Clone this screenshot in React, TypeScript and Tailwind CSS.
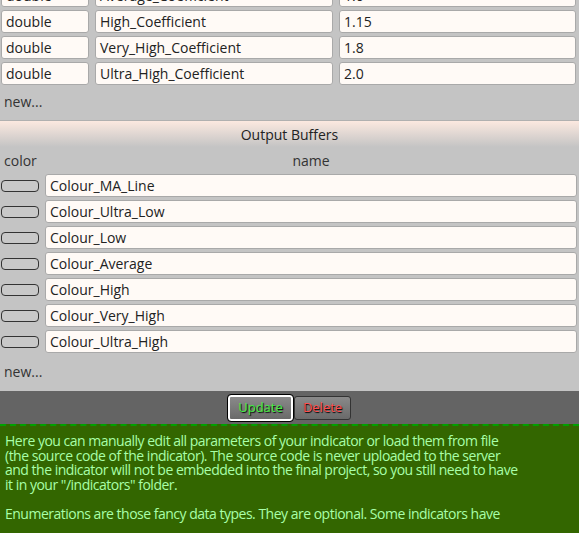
import React from "react";

const params = [
  ["double", "Average_Coefficient", "1.0"],
  ["double", "High_Coefficient", "1.15"],
  ["double", "Very_High_Coefficient", "1.8"],
  ["double", "Ultra_High_Coefficient", "2.0"],
];

const buffers = [
  "Colour_MA_Line",
  "Colour_Ultra_Low",
  "Colour_Low",
  "Colour_Average",
  "Colour_High",
  "Colour_Very_High",
  "Colour_Ultra_High",
];

const inputCls =
  "h-[23px] rounded-[3px] border border-[#a9a9a9] bg-[#fffaf6] px-[4px] text-[14px] text-[#222] leading-[21px] outline-none";

export default function App() {
  return (
    <div
      className="h-[533px] w-[579px] overflow-hidden bg-[#c4c4c4]"
      style={{ fontFamily: '"Open Sans", "Noto Sans", sans-serif' }}
    >
      <div className="-mt-[16px] flex flex-col gap-[3px] pl-[1px] pr-[3px]">
        {params.map((p, i) => (
          <div key={i} className="flex gap-[6px]">
            <div className={inputCls + " w-[88px]"}>{p[0]}</div>
            <div className={inputCls + " w-[238px]"}>{p[1]}</div>
            <div className={inputCls + " flex-1"}>{p[2]}</div>
          </div>
        ))}
      </div>
      <div className="h-[35px] pl-[4px] pt-[6px] text-[14px] text-[#333]">new...</div>
      <div className="h-[27px] border-t border-[#b0b0b0] bg-gradient-to-b from-[#fce9e0] to-[#c4c4c4] pt-[3px] text-center text-[14px] text-[#222]">
        Output Buffers
      </div>
      <div className="flex h-[27px] items-center pb-[1px] text-[14px] text-[#333]">
        <div className="w-[45px] pl-[4px]">color</div>
        <div className="flex-1 pr-[2px] text-center">name</div>
      </div>
      <div className="flex flex-col gap-[3px] pl-[1px] pr-[2px]">
        {buffers.map((b, i) => (
          <div key={i} className="flex items-center gap-[6px]">
            <div className="h-[12px] w-[38px] rounded-[4px] border-[1.5px] border-[#333] bg-[#c8c8c8]" />
            <div className={inputCls + " flex-1"}>{b}</div>
          </div>
        ))}
      </div>
      <div className="h-[38px] pl-[4px] pt-[8px] text-[14px] text-[#333]">new...</div>
      <div className="flex h-[33px] items-center justify-center gap-[1px] bg-[#646464]">
        <button className="h-[26px] w-[65px] rounded-[3px] border-2 border-white bg-gradient-to-b from-[#8a8a8a] to-[#6a6a6a] text-[13px] text-[#44ee44] outline outline-1 outline-black [text-shadow:1px_1px_1px_#000]">
          Update
        </button>
        <button className="h-[24px] w-[57px] rounded-[3px] border border-[#333] bg-gradient-to-b from-[#8a8a8a] to-[#6a6a6a] text-[13px] text-[#ff4d4d] [text-shadow:1px_1px_1px_#000]">
          Delete
        </button>
      </div>
      <div className="h-[200px] border-t-2 border-dashed border-[#00a000] bg-[#336600] px-[5px] pt-[8px] text-[14px] leading-[14.6px] tracking-[-0.5px] text-[#a8ffa8]">
        <p>
          Here you can manually edit all parameters of your indicator or load them from file
          <br />
          (the source code of the indicator). The source code is never uploaded to the server
          <br />
          and the indicator will not be embedded into the final project, so you still need to have
          <br />
          it in your "/indicators" folder.
        </p>
        <p className="mt-[14.6px]">
          Enumerations are those fancy data types. They are optional. Some indicators have
        </p>
      </div>
    </div>
  );
}
